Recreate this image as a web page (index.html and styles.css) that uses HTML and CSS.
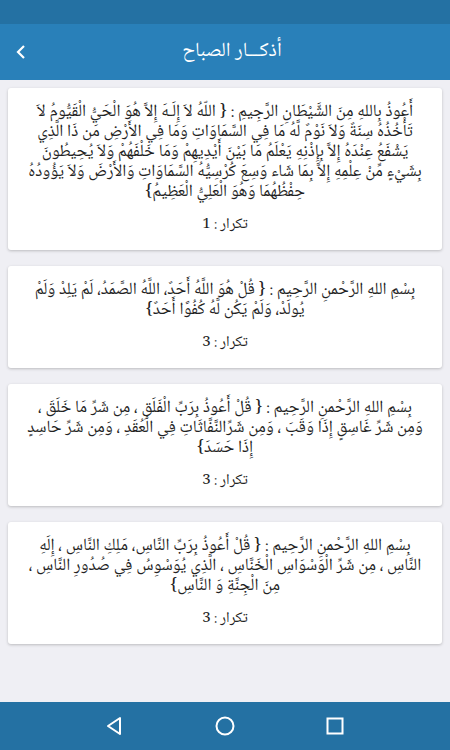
FILE: index.html
```html
<!DOCTYPE html>
<html lang="ar" dir="rtl">
<head>
  <meta charset="UTF-8">
  <title>أذكار الصباح</title>
  <link rel="stylesheet" href="styles.css">
</head>
<body>
  <div class="status-bar"></div>
  <div class="app-bar">
    <span class="title">أذكـــار الصباح</span>
    <svg class="back" width="12" height="16" viewBox="0 0 12 16">
      <path d="M9 2 L3 8 L9 14" fill="none" stroke="#fff" stroke-width="2.2"/>
    </svg>
  </div>

  <div class="list">
    <div class="card">
      <p class="zikr">أَعُوذُ بِاللهِ مِنَ الشَّيْطَانِ الرَّجِيمِ : { اللّهُ لاَ إِلَـهَ إِلاَّ هُوَ الْحَيُّ الْقَيُّومُ لاَ تَأْخُذُهُ سِنَةٌ وَلاَ نَوْمٌ لَّهُ مَا فِي السَّمَاوَاتِ وَمَا فِي الأَرْضِ مَن ذَا الَّذِي يَشْفَعُ عِنْدَهُ إِلاَّ بِإِذْنِهِ يَعْلَمُ مَا بَيْنَ أَيْدِيهِمْ وَمَا خَلْفَهُمْ وَلاَ يُحِيطُونَ بِشَيْءٍ مِّنْ عِلْمِهِ إِلاَّ بِمَا شَاء وَسِعَ كُرْسِيُّهُ السَّمَاوَاتِ وَالأَرْضَ وَلاَ يَؤُودُهُ حِفْظُهُمَا وَهُوَ الْعَلِيُّ الْعَظِيمُ}</p>
      <p class="count">تكرار : 1</p>
    </div>
    <div class="card">
      <p class="zikr">بِسْمِ اللهِ الرَّحْمنِ الرَّحِيم : { قُلْ هُوَ اللَّهُ أَحَدٌ، اللَّهُ الصَّمَدُ، لَمْ يَلِدْ وَلَمْ يُولَدْ، وَلَمْ يَكُن لَّهُ كُفُوًا أَحَدٌ}</p>
      <p class="count">تكرار : 3</p>
    </div>
    <div class="card">
      <p class="zikr">بِسْمِ اللهِ الرَّحْمنِ الرَّحِيم : { قُلْ أَعُوذُ بِرَبِّ الْفَلَقِ ، مِن شَرِّ مَا خَلَقَ ، وَمِن شَرِّ غَاسِقٍ إِذَا وَقَبَ ، وَمِن شَرِّالنَّفَّاثَاتِ فِي الْعُقَدِ ، وَمِن شَرِّ حَاسِدٍ إِذَا حَسَدَ}</p>
      <p class="count">تكرار : 3</p>
    </div>
    <div class="card">
      <p class="zikr">بِسْمِ اللهِ الرَّحْمنِ الرَّحِيم : { قُلْ أَعُوذُ بِرَبِّ النَّاسِ، مَلِكِ النَّاسِ ، إِلَهِ النَّاسِ ، مِن شَرِّ الْوَسْوَاسِ الْخَنَّاسِ ، الَّذِي يُوَسْوِسُ فِي صُدُورِ النَّاسِ ، مِنَ الْجِنَّةِ وَ النَّاسِ}</p>
      <p class="count">تكرار : 3</p>
    </div>
  </div>

  <div class="nav-bar">
    <svg width="20" height="20" viewBox="0 0 20 20">
      <path d="M15 2 L15 18 L3 10 Z" fill="none" stroke="#fff" stroke-width="2" stroke-linejoin="round"/>
    </svg>
    <svg width="20" height="20" viewBox="0 0 20 20">
      <circle cx="10" cy="10" r="8.5" fill="none" stroke="#fff" stroke-width="2"/>
    </svg>
    <svg width="20" height="20" viewBox="0 0 20 20">
      <rect x="2.5" y="2.5" width="15" height="15" fill="none" stroke="#fff" stroke-width="2"/>
    </svg>
  </div>
</body>
</html>
```

FILE: styles.css
```css
body {
  margin: 0;
  height: 750px;
  display: flex;
  flex-direction: column;
  background: #efeff4;
  font-family: "Noto Naskh Arabic", "Noto Sans Arabic", "DejaVu Sans", sans-serif;
  color: #222;
}
.status-bar {
  height: 24px;
  background: #2471a3;
}
.app-bar {
  height: 56px;
  background: #2980b9;
  display: flex;
  align-items: center;
  justify-content: center;
  position: relative;
}
.title {
  color: #fff;
  font-size: 20px;
  margin-right: -14px;
}
.back {
  position: absolute;
  left: 15px;
  top: 20px;
}
.list {
  flex: 1;
  padding: 8px 8px 0;
  display: flex;
  flex-direction: column;
  gap: 16px;
}
.card {
  background: #fff;
  border-radius: 3px;
  box-shadow: 0 1px 3px rgba(0, 0, 0, 0.22);
  padding: 15px 16px 16px;
  text-align: center;
}
.zikr {
  margin: 0;
  font-size: 17px;
  line-height: 20px;
}
.count {
  margin: 14px 0 0;
  font-size: 15px;
  line-height: 17px;
}
.nav-bar {
  height: 48px;
  background: #2471a3;
  display: flex;
  direction: ltr;
  align-items: center;
  justify-content: space-around;
  padding: 0 60px;
}
```
